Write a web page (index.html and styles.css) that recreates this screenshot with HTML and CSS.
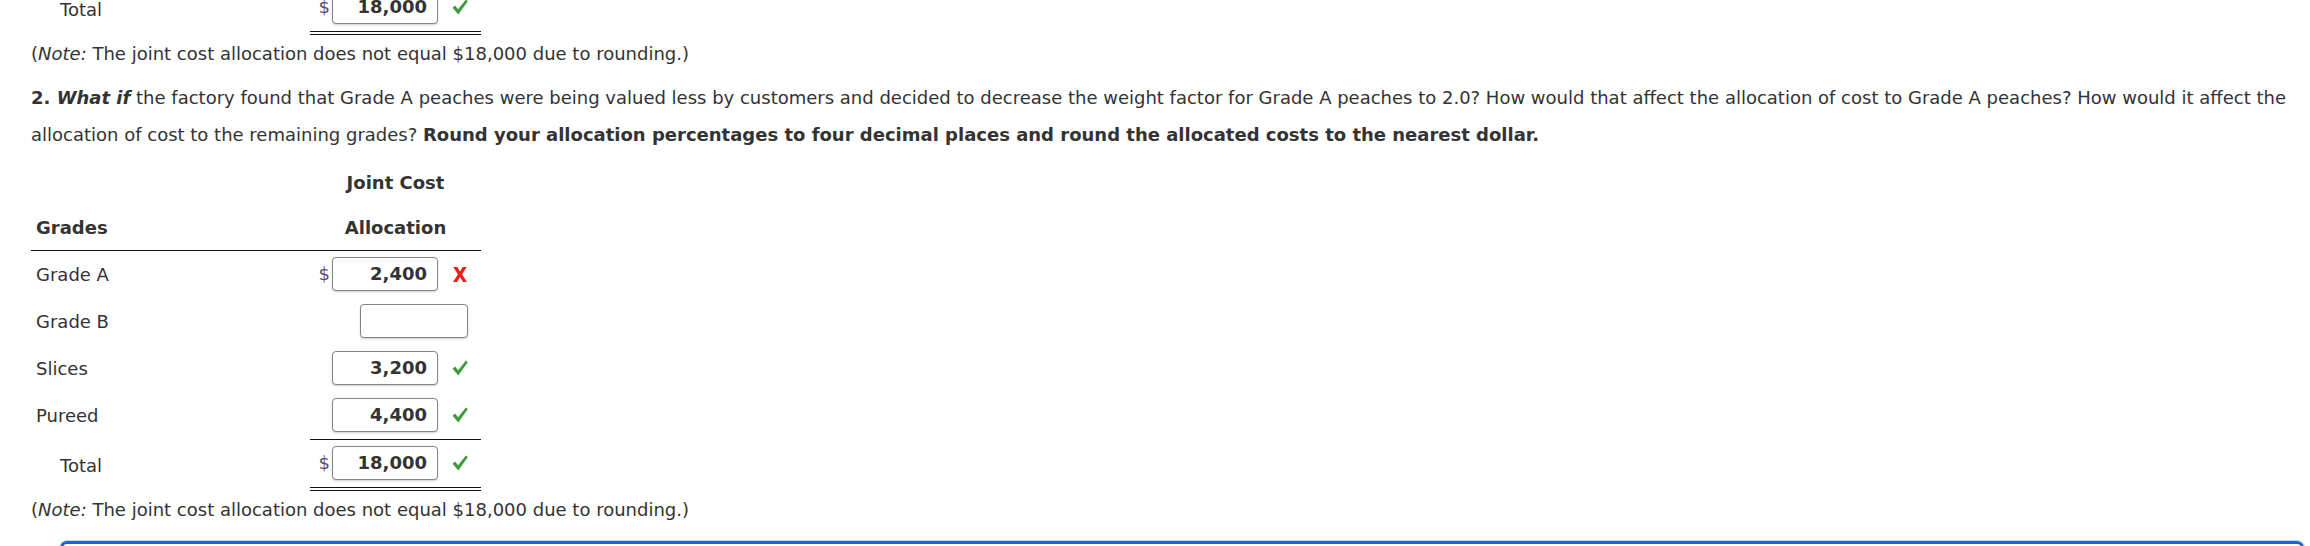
FILE: index.html
```html
<!DOCTYPE html>
<html lang="en">
<head>
<meta charset="utf-8">
<title>Joint Cost Allocation</title>
<link rel="stylesheet" href="styles.css">
</head>
<body>
<div class="page">
  <table class="alloc prev">
    <colgroup><col class="c-label"><col class="c-amt"></colgroup>
    <tbody>
      <tr>
        <td class="label total-label">Total</td>
        <td class="amt final">
          <div class="cell">
            <span class="cur">$</span><span class="box">18,000</span>
            <span class="mark"><svg class="check" viewBox="0 0 16 16" width="16" height="16"><path d="M0.6 8.8 L3.0 6.6 L6.1 10.2 L13.9 0.6 L15.8 2.2 L6.3 15.4 Z"/></svg></span>
          </div>
        </td>
      </tr>
    </tbody>
  </table>

  <p class="note">(<em>Note:</em> The joint cost allocation does not equal $18,000 due to rounding.)</p>

  <p class="question"><strong>2. <em>What if</em></strong> the factory found that Grade A peaches were being valued less by customers and decided to decrease the weight factor for Grade A peaches to 2.0? How would that affect the allocation of cost to Grade A peaches? How would it affect the allocation of cost to the remaining grades? <strong>Round your allocation percentages to four decimal places and round the allocated costs to the nearest dollar.</strong></p>

  <table class="alloc main">
    <colgroup><col class="c-label"><col class="c-amt"></colgroup>
    <thead>
      <tr class="head1">
        <th class="label-head"></th>
        <th class="amt-head">Joint Cost</th>
      </tr>
      <tr class="head2">
        <th class="label-head">Grades</th>
        <th class="amt-head">Allocation</th>
      </tr>
    </thead>
    <tbody>
      <tr>
        <td class="label">Grade A</td>
        <td class="amt">
          <div class="cell">
            <span class="cur">$</span><span class="box">2,400</span>
            <span class="mark"><svg class="cross" viewBox="0 0 14 15" width="14" height="15"><path d="M0.3 0 L4.3 0 L7 4.6 L9.7 0 L13.7 0 L9.1 7.4 L14 15 L10 15 L7 10.1 L4 15 L0 15 L4.9 7.4 Z"/></svg></span>
          </div>
        </td>
      </tr>
      <tr>
        <td class="label">Grade B</td>
        <td class="amt">
          <div class="cell">
            <span class="box empty"></span>
          </div>
        </td>
      </tr>
      <tr>
        <td class="label">Slices</td>
        <td class="amt">
          <div class="cell">
            <span class="box">3,200</span>
            <span class="mark"><svg class="check" viewBox="0 0 16 16" width="16" height="16"><path d="M0.6 8.8 L3.0 6.6 L6.1 10.2 L13.9 0.6 L15.8 2.2 L6.3 15.4 Z"/></svg></span>
          </div>
        </td>
      </tr>
      <tr>
        <td class="label">Pureed</td>
        <td class="amt">
          <div class="cell">
            <span class="box">4,400</span>
            <span class="mark"><svg class="check" viewBox="0 0 16 16" width="16" height="16"><path d="M0.6 8.8 L3.0 6.6 L6.1 10.2 L13.9 0.6 L15.8 2.2 L6.3 15.4 Z"/></svg></span>
          </div>
        </td>
      </tr>
      <tr>
        <td class="label total-label">Total</td>
        <td class="amt final">
          <div class="cell">
            <span class="cur">$</span><span class="box">18,000</span>
            <span class="mark"><svg class="check" viewBox="0 0 16 16" width="16" height="16"><path d="M0.6 8.8 L3.0 6.6 L6.1 10.2 L13.9 0.6 L15.8 2.2 L6.3 15.4 Z"/></svg></span>
          </div>
        </td>
      </tr>
    </tbody>
  </table>

  <p class="note">(<em>Note:</em> The joint cost allocation does not equal $18,000 due to rounding.)</p>

  <div class="panel"></div>
</div>
</body>
</html>
```

FILE: styles.css
```css
html, body {
  margin: 0;
  padding: 0;
  overflow: hidden;
  background: #ffffff;
}

body {
  font-family: "DejaVu Sans", Verdana, sans-serif;
  font-size: 18px;
  color: #333333;
}

.page {
  margin-top: -17px;
  padding: 0 6px 0 31px;
}

.alloc {
  width: 450px;
  table-layout: fixed;
  border-collapse: separate;
  border-spacing: 0;
}

.c-label { width: 279px; }
.c-amt { width: 171px; }

.alloc td {
  padding: 6px 0 7px 0;
  vertical-align: top;
}

.alloc td.label {
  line-height: 34px;
  padding: 7px 0 6px 5px;
  white-space: nowrap;
}

.alloc td.total-label {
  padding: 10px 0 3px 29px;
}

.alloc td.amt {
  padding-right: 13px;
}

.final {
  border-top: 1px solid #111111;
  border-bottom: 4px double #111111;
}

.head1 th,
.head2 th {
  height: 45px;
  line-height: 45px;
  padding: 0;
  font-weight: bold;
  vertical-align: top;
}

.head2 th {
  border-bottom: 1px solid #111111;
}

.alloc th.label-head {
  text-align: left;
  padding-left: 5px;
}

.amt-head {
  text-align: center;
}

.cell {
  display: flex;
  justify-content: flex-end;
  align-items: center;
  height: 34px;
}

.cur {
  color: #555555;
  margin-right: 2px;
  line-height: 1;
}

.box {
  box-sizing: border-box;
  width: 106px;
  height: 34px;
  border: 1px solid #858585;
  border-radius: 4px;
  box-shadow: 0 1px 2px rgba(0, 0, 0, 0.2);
  background: #ffffff;
  text-align: right;
  padding-right: 10px;
  font-weight: bold;
  line-height: 32px;
  color: #333333;
}

.box.empty {
  width: 108px;
}

.mark {
  width: 16px;
  margin-left: 14px;
  display: flex;
  justify-content: center;
  align-items: center;
}

.check path {
  fill: #3c9c3c;
}

.cross path {
  fill: #f21c1c;
}

.note {
  margin: 0;
  line-height: 37px;
}

.question {
  margin: 7px 0 0 0;
  line-height: 37px;
}

.main {
  margin-top: 7px;
}

.panel {
  margin: 13px 0 0 29px;
  height: 40px;
  border: 3px solid #1a66cc;
  border-radius: 7px;
  box-shadow: 0 0 0 1px #c9d6e2;
}
```
